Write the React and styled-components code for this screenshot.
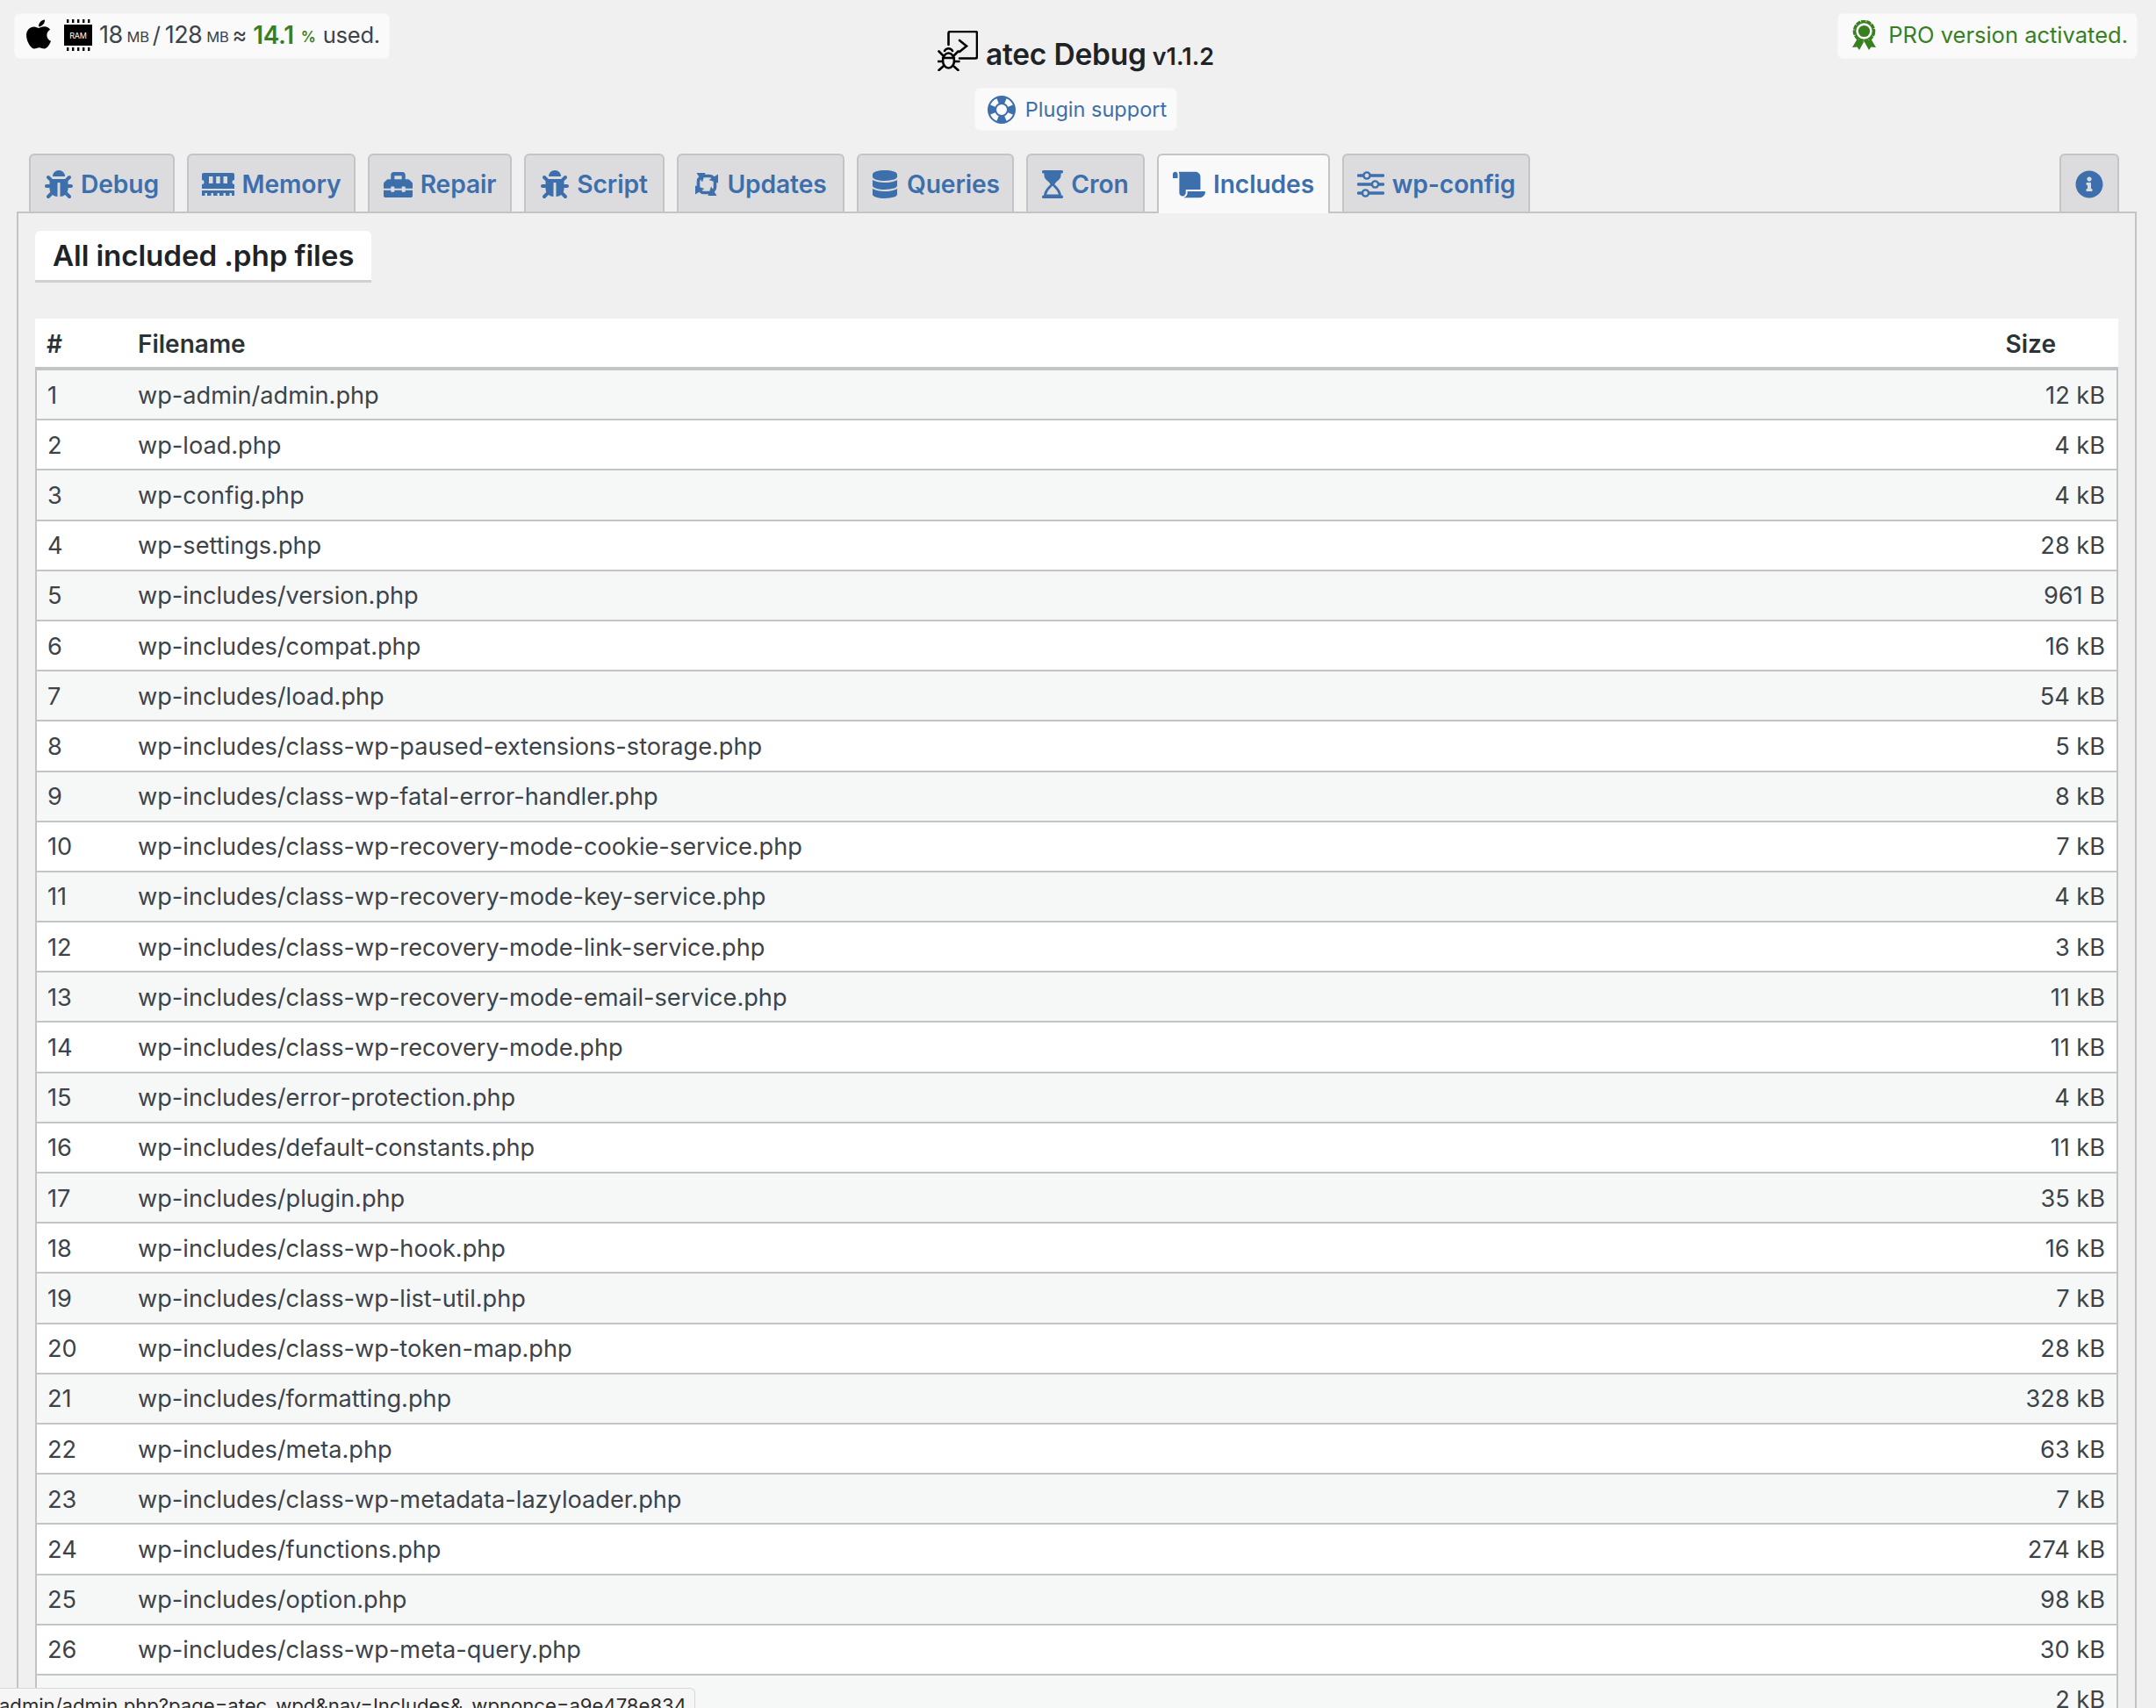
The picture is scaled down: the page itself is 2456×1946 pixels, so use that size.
import React from 'react';
import styled, { createGlobalStyle } from 'styled-components';
import { FaApple, FaToolbox, FaScroll, FaBug, FaDatabase, FaInfoCircle } from 'react-icons/fa';
import { BsLifePreserver } from 'react-icons/bs';

const Global = createGlobalStyle`
  html, body { margin: 0; padding: 0; height: 1946px; overflow: hidden; background: #f0f0f1; }
  body { font-family: Inter, "Liberation Sans", sans-serif; color: #3c434a; }
  #root { height: 1946px; overflow: hidden; }
`;
const Page = styled.div`position: relative; height: 1946px; overflow: hidden; padding: 0 22px 0 17px; box-sizing: border-box;`;
const Header = styled.header`display: grid; grid-template-columns: 1fr auto 1fr; height: 175px; align-items: start; padding-top: 16px; box-sizing: border-box;`;
const Pill = styled.div`
  display: inline-flex; align-items: center; background: #fafafa; border-radius: 6px; height: 50px; box-sizing: border-box;
  box-shadow: 0 0 0 1px #f6f6f6; white-space: nowrap;
`;
const MemoryPill = styled(Pill)`justify-self: start; padding: 0 10px 3px 8px; font-size: 25.5px; letter-spacing: -0.2px;`;
const Num = styled.span`margin-left: ${p => p.$gap}px; font-size: 27px; letter-spacing: -0.6px;`;
const Small = styled.span`font-size: 16.5px; margin: 4px 4px 0 5px;`;
const Green = styled.b`color: #38801f; font-weight: 600; margin-left: 7px; font-size: 28px; letter-spacing: -0.3px;`;
const GreenSmall = styled.b`color: #38801f; font-weight: 600; font-size: 17px; margin: 4px 8px 0 8px;`;
const AppleIcon = styled(FaApple)`color: #000; font-size: 38px; margin-right: 10px; margin-top: -2px;`;
const ProPill = styled(Pill)`justify-self: end; padding: 0 10px 3px 16px; color: #38801f; font-size: 25.5px; gap: 14px;`;
const Center = styled.div`display: flex; flex-direction: column; align-items: center; padding-top: 19px;`;
const Title = styled.h1`display: flex; align-items: flex-end; margin: 0; height: 46px; font-size: 33.5px; line-height: 38px; font-weight: 600; color: #1d2327; letter-spacing: -0.2px;`;
const Version = styled.span`font-size: 27px; line-height: 33px; margin-left: 7px; letter-spacing: 0;`;
const SupportPill = styled(Pill)`margin-top: 20px; height: 47px; padding: 0 11px 0 14px; color: #3c6fac; font-size: 23.5px; gap: 11px;`;
const Tabs = styled.nav`display: flex; gap: 14px; padding-left: 16px; padding-right: 20px; height: 68px; box-sizing: border-box;`;
const Tab = styled.a`
  display: flex; align-items: center; justify-content: center; gap: 9px; box-sizing: border-box; height: ${p => p.$active ? 68 : 66}px;
  width: ${p => p.$w}px; padding-top: 2px; padding-bottom: ${p => p.$active ? 2 : 0}px;
  border: 2px solid #c3c4c7; border-bottom: 0; border-radius: 6px 6px 0 0;
  background: ${p => p.$active ? '#f9f9f9' : '#dcdcde'}; color: #3c6fac; font-size: 28.2px; font-weight: 600;
  position: relative; z-index: ${p => p.$active ? 2 : 0}; letter-spacing: -0.1px;
  margin-left: ${p => p.$end ? 'auto' : '0'}; white-space: nowrap;
`;
const Panel = styled.main`border: 2px solid #c3c4c7; border-bottom: 0; margin-left: 2px; padding: 20px 19px 0; height: 1800px; box-sizing: border-box; margin-top: -2px; position: relative; z-index: 1;`;
const Heading = styled.h2`
  display: block; width: fit-content; margin: 0; height: 59px; line-height: 56px; padding: 0 20px; background: #fff; box-sizing: border-box;
  border-bottom: 3px solid #d0d0d2; border-radius: 6px 6px 0 0; font-size: 33.2px; font-weight: 600; color: #1d2327; letter-spacing: -0.1px;
`;
const Table = styled.div`margin-top: 41px; font-size: 27.15px;`;
const HeadRow = styled.div`
  display: grid; grid-template-columns: 117px 1fr 200px; align-items: center; height: 59px; box-sizing: border-box; padding-top: 2px;
  background: #fff; border-bottom: 4px solid #c3c4c7; font-weight: 600; color: #2c3338; font-size: 28px;
`;
const Row = styled.div`
  display: grid; grid-template-columns: 115px 1fr 200px; align-items: center; height: 57.2px; box-sizing: border-box; padding-top: 1px;
  background: ${p => p.$odd ? '#f6f7f7' : '#fff'}; border: 2px solid #c3c4c7; border-width: 0 2px 2px 2px;
`;
const Cell = styled.div`padding-left: ${p => p.$first ? '12px' : '0'}; white-space: nowrap;`;
const HeadCell = styled(Cell)`padding-left: ${p => p.$first ? '13px' : '0'};`;
const SizeHead = styled.div`text-align: right; padding-right: 71px;`;
const SizeCell = styled.div`text-align: right; padding-right: 13px;`;
const Status = styled.div`
  position: absolute; left: 0; bottom: 0; width: 792px; height: 23px; background: #f6f6f6; border: 1px solid #d8d8d8; border-left: 0; border-bottom: 0;
  border-radius: 0 6px 0 0; box-sizing: border-box; overflow: hidden; z-index: 5; font-size: 22.1px; line-height: 38px; color: #2c2c2c;
  display: flex; justify-content: flex-end; padding-right: 9px; white-space: nowrap;
`;
const TitleSvg = styled.svg`margin-right: 9px; flex: none; align-self: flex-start;`;

const RamIcon = () => (
  <svg width="32" height="36" viewBox="0 0 32 36">
    <rect x="0" y="6" width="32" height="24" fill="#000" />
    {[3, 9, 15, 21, 27].map(x => <rect key={x} x={x} y="0" width="2.4" height="4" fill="#000" />)}
    {[3, 9, 15, 21, 27].map(x => <rect key={x} x={x} y="32" width="2.4" height="4" fill="#000" />)}
    <text x="16" y="22" textAnchor="middle" fill="#fff" fontSize="9" fontFamily="Inter, sans-serif">RAM</text>
  </svg>
);
const TitleIcon = () => (
  <TitleSvg width="46" height="46" viewBox="0 0 46 46" fill="none" stroke="#000" strokeWidth="2.6" strokeLinecap="round">
    <path d="M12.5 16 V3 a2 2 0 0 1 2 -2 H43 a2 2 0 0 1 2 2 V29.5 a2 2 0 0 1 -2 2 H25" />
    <path d="M25 11 L33 17.5 L25 24" />
    <ellipse cx="12.5" cy="34" rx="6.5" ry="8.5" />
    <path d="M6 31 H19 M8 23 a5 5 0 0 1 9 0 M5.5 35 H0.5 M19.5 35 H24.5 M1.5 23.5 L6.5 28.5 M23.5 23.5 L18.5 28.5 M1.5 45 L6.5 40.5 M23.5 45 L18.5 40.5" />
  </TitleSvg>
);
const SyncIcon = () => (
  <svg width="28" height="30" viewBox="0 0 28 28" fill="#3c6fac" stroke="none">
    {[0, 90, 180, 270].map(r => (
      <g key={r} transform={`rotate(${r} 14 14)`}>
        <path d="M10.5 4.5 H17 Q20 4.5 21.5 6.5" fill="none" stroke="#3c6fac" strokeWidth="3.6" />
        <path d="M16.5 9 L27 2.5 L27 12.5 Z" />
      </g>
    ))}
  </svg>
);
const MemoryIcon = () => (
  <svg width="37" height="26" viewBox="0 0 37 26" fill="#3c6fac">
    <path fillRule="evenodd" d="M2 0H35a2 2 0 0 1 2 2V8a2.5 2.5 0 0 0 0 5V18H0V13a2.5 2.5 0 0 0 0-5V2a2 2 0 0 1 2-2Z M8 4v8h4.5V4Z M16.2 4v8h4.5V4Z M24.5 4v8h4.5V4Z" />
    <path d="M0 20H37V26H34V23H31.5V26H27V23H24.5V26H20V23H17.5V26H13V23H10.5V26H6V23H3.5V26H0Z" />
  </svg>
);
const HourglassIcon = () => (
  <svg width="24" height="32" viewBox="0 0 24 32" fill="#3c6fac">
    <rect x="0" y="0" width="24" height="3.4" rx="1.5" />
    <rect x="0" y="28.6" width="24" height="3.4" rx="1.5" />
    <path d="M2.5 3 H21.5 V6 C21.5 11 15 13 14.5 16 H9.5 C9 13 2.5 11 2.5 6 Z" />
    <path d="M3.5 29 C3.5 22 9.5 19 12 15.5 C14.5 19 20.5 22 20.5 29 Z" fill="none" stroke="#3c6fac" strokeWidth="3" />
  </svg>
);
const SlidersIcon = () => (
  <svg width="31" height="30" viewBox="0 0 31 30" fill="none" stroke="#3c6fac">
    <path d="M1.5 5 H29.5 M1.5 15 H29.5 M1.5 25 H29.5" strokeWidth="3.4" strokeLinecap="round" />
    <circle cx="11" cy="5" r="3.6" fill="#dcdcde" strokeWidth="2.4" />
    <circle cx="20.5" cy="15" r="3.6" fill="#dcdcde" strokeWidth="2.4" />
    <circle cx="9.5" cy="25" r="3.6" fill="#dcdcde" strokeWidth="2.4" />
  </svg>
);
const AwardIcon = () => (
  <svg width="27" height="34" viewBox="0 0 27 34" fill="#38801f">
    <path d="M6.5 20 L0 31 L5.5 30.6 L8 34 L13 25 Z M20.5 20 L27 31 L21.5 30.6 L19 34 L14 25 Z" />
    <circle cx="13.5" cy="12.5" r="11.5" fill="#fafafa" stroke="#38801f" strokeWidth="2.6" strokeDasharray="5.5 0.8" />
    <circle cx="13.5" cy="12.5" r="10" fill="none" stroke="#38801f" strokeWidth="1.6" />
    <circle cx="13.5" cy="12.5" r="6.6" />
  </svg>
);

const files = [
  ['wp-admin/admin.php', '12 kB'], ['wp-load.php', '4 kB'], ['wp-config.php', '4 kB'], ['wp-settings.php', '28 kB'],
  ['wp-includes/version.php', '961 B'], ['wp-includes/compat.php', '16 kB'], ['wp-includes/load.php', '54 kB'],
  ['wp-includes/class-wp-paused-extensions-storage.php', '5 kB'], ['wp-includes/class-wp-fatal-error-handler.php', '8 kB'],
  ['wp-includes/class-wp-recovery-mode-cookie-service.php', '7 kB'], ['wp-includes/class-wp-recovery-mode-key-service.php', '4 kB'],
  ['wp-includes/class-wp-recovery-mode-link-service.php', '3 kB'], ['wp-includes/class-wp-recovery-mode-email-service.php', '11 kB'],
  ['wp-includes/class-wp-recovery-mode.php', '11 kB'], ['wp-includes/error-protection.php', '4 kB'], ['wp-includes/default-constants.php', '11 kB'],
  ['wp-includes/plugin.php', '35 kB'], ['wp-includes/class-wp-hook.php', '16 kB'], ['wp-includes/class-wp-list-util.php', '7 kB'],
  ['wp-includes/class-wp-token-map.php', '28 kB'], ['wp-includes/formatting.php', '328 kB'], ['wp-includes/meta.php', '63 kB'],
  ['wp-includes/class-wp-metadata-lazyloader.php', '7 kB'], ['wp-includes/functions.php', '274 kB'], ['wp-includes/option.php', '98 kB'],
  ['wp-includes/class-wp-meta-query.php', '30 kB'], ['wp-includes/class-wp-matchesmapregex.php', '2 kB'],
];
const tabs = [
  ['Debug', 166, <FaBug size={32} />], ['Memory', 192, <MemoryIcon />], ['Repair', 164, <FaToolbox size={33} />], ['Script', 160, <FaBug size={32} />],
  ['Updates', 191, <SyncIcon />], ['Queries', 179, <FaDatabase size={32} />], ['Cron', 135, <HourglassIcon />], ['Includes', 197, <FaScroll size={37} />, true], ['wp-config', 214, <SlidersIcon />],
];

export default function App() {
  return (
    <Page>
      <Global />
      <Header>
        <MemoryPill>
          <AppleIcon /><RamIcon /><Num $gap={8}>18</Num><Small>MB</Small>/<Num $gap={5}>128</Num><Small>MB</Small>≈<Green>14.1</Green><GreenSmall>%</GreenSmall>used.
        </MemoryPill>
        <Center>
          <Title><TitleIcon />atec Debug <Version>v1.1.2</Version></Title>
          <SupportPill><BsLifePreserver size={32} />Plugin support</SupportPill>
        </Center>
        <ProPill><AwardIcon />PRO version activated.</ProPill>
      </Header>
      <Tabs>
        {tabs.map(([t, w, i, a]) => <Tab key={t} $w={w} $active={a}>{i}{t}</Tab>)}
        <Tab $end $w={68}><FaInfoCircle size={32} /></Tab>
      </Tabs>
      <Panel>
        <Heading>All included .php files</Heading>
        <Table>
          <HeadRow><HeadCell $first>#</HeadCell><HeadCell>Filename</HeadCell><SizeHead>Size</SizeHead></HeadRow>
          {files.map(([f, s], i) => (
            <Row key={f} $odd={i % 2 === 0}><Cell $first>{i + 1}</Cell><Cell>{f}</Cell><SizeCell>{s}</SizeCell></Row>
          ))}
        </Table>
      </Panel>
      <Status>wp-admin/admin.php?page=atec_wpd&amp;nav=Includes&amp;_wpnonce=a9e478e834</Status>
    </Page>
  );
}
